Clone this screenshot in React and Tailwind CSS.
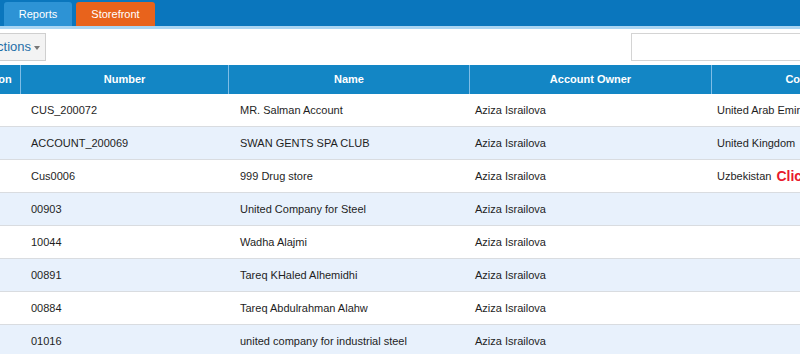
const rows = [
  { number: 'CUS_200072', name: 'MR. Salman Account', owner: 'Aziza Israilova', country: 'United Arab Emirates' },
  { number: 'ACCOUNT_200069', name: 'SWAN GENTS SPA CLUB', owner: 'Aziza Israilova', country: 'United Kingdom' },
  { number: 'Cus0006', name: '999 Drug store', owner: 'Aziza Israilova', country: 'Uzbekistan', click: true },
  { number: '00903', name: 'United Company for Steel', owner: 'Aziza Israilova', country: '' },
  { number: '10044', name: 'Wadha Alajmi', owner: 'Aziza Israilova', country: '' },
  { number: '00891', name: 'Tareq KHaled Alhemidhi', owner: 'Aziza Israilova', country: '' },
  { number: '00884', name: 'Tareq Abdulrahman Alahw', owner: 'Aziza Israilova', country: '' },
  { number: '01016', name: 'united company for industrial steel', owner: 'Aziza Israilova', country: '' },
]

const cols = 'grid grid-cols-[51px_208px_241px_242px_190px]'

const App = () => {
  return (
    <div className="w-[800px] h-[354px] overflow-hidden bg-white text-[11px] text-[#1e1e1e]" style={{ fontFamily: '"Liberation Sans", Arial, sans-serif' }}>
      {/* top nav */}
      <div className="h-[26px] bg-[#0a76bd] flex items-end gap-1 pl-1">
        <div className="h-[24px] w-[68px] rounded-t-[3px] bg-[#2d93d5] text-white flex items-center justify-center">Reports</div>
        <div className="h-[24px] w-[79px] rounded-t-[3px] bg-[#e8631c] text-white flex items-center justify-center">Storefront</div>
      </div>
      <div className="h-[3px] bg-[#a9d5f3]" />

      {/* toolbar */}
      <div className="h-[36px] flex items-center justify-between">
        <div className="h-[28px] w-[60px] -ml-[14px] border border-[#cfcfcf] bg-[#f3f3f3] flex items-center justify-end pr-[5px] gap-[3px] text-[13px] text-[#1f6fa8]">
          <span>Actions</span>
          <svg width="6" height="4" viewBox="0 0 6 4" className="mt-[1px]"><path d="M0 0h6L3 4z" fill="#777" /></svg>
        </div>
        <div className="h-[28px] w-[180px] border border-[#d4d4d4] bg-white -mr-[11px]" />
      </div>

      {/* table, scrolled horizontally */}
      <div className="overflow-hidden">
        <div className="-ml-[31px] w-[932px]">
          <div className={`${cols} h-[29px] bg-[#1386c5] text-white font-bold`}>
            <div className="flex items-center justify-center">Action</div>
            <div className="flex items-center justify-center border-l border-[#7fbde6]">Number</div>
            <div className="flex items-center justify-center border-l border-[#7fbde6]">Name</div>
            <div className="flex items-center justify-center border-l border-[#7fbde6]">Account Owner</div>
            <div className="flex items-center justify-center border-l border-[#7fbde6]">Country</div>
          </div>
          {rows.map((r, i) => (
            <div key={r.number} className={`${cols} h-[33px] border-b border-[#d9dce0] ${i % 2 ? 'bg-[#e8f1fc]' : 'bg-white'}`}>
              <div />
              <div className="flex items-center pl-[11px]">{r.number}</div>
              <div className="flex items-center pl-[12px]">{r.name}</div>
              <div className="flex items-center pl-[6px]">{r.owner}</div>
              <div className="flex items-center pl-[6px] whitespace-nowrap">
                {r.country}
                {r.click && <span className="ml-[5px] text-[14px] font-bold text-[#e8192c]">Click</span>}
              </div>
            </div>
          ))}
        </div>
      </div>
    </div>
  )
}

export default App
